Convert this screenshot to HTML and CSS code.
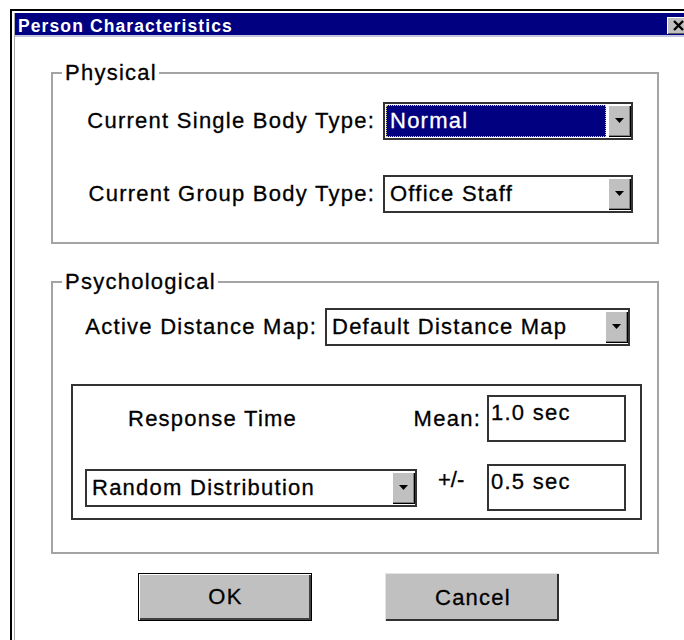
FILE: index.html
```html
<!DOCTYPE html>
<html lang="en">
<head>
<meta charset="utf-8">
<title>Person Characteristics</title>
<link rel="stylesheet" href="styles.css">
</head>
<body>
<div class="window">
  <div class="frame">
    <div class="titlebar">
      <span class="title">Person Characteristics</span>
      <span class="close" aria-label="Close">
        <svg width="11" height="11" viewBox="0 0 11 11"><path d="M1 1L10 10M10 1L1 10" stroke="#000" stroke-width="2.4" fill="none"/></svg>
      </span>
    </div>

    <div class="dialog">
      <fieldset class="group group-physical">
        <legend>Physical</legend>
        <div class="row">
          <span class="label">Current Single Body Type:</span>
          <div class="combo combo-body">
            <span class="combo-value is-selected">Normal</span>
            <span class="combo-btn"><svg width="9" height="6" viewBox="0 0 9 6"><path d="M0 0H9L4.5 5Z" fill="#000"/></svg></span>
          </div>
        </div>
        <div class="row">
          <span class="label">Current Group Body Type:</span>
          <div class="combo combo-body">
            <span class="combo-value">Office Staff</span>
            <span class="combo-btn"><svg width="9" height="6" viewBox="0 0 9 6"><path d="M0 0H9L4.5 5Z" fill="#000"/></svg></span>
          </div>
        </div>
      </fieldset>

      <fieldset class="group group-psych">
        <legend>Psychological</legend>
        <div class="row row-map">
          <span class="label">Active Distance Map:</span>
          <div class="combo combo-map">
            <span class="combo-value">Default Distance Map</span>
            <span class="combo-btn"><svg width="9" height="6" viewBox="0 0 9 6"><path d="M0 0H9L4.5 5Z" fill="#000"/></svg></span>
          </div>
        </div>

        <div class="timing">
          <span class="rt-label">Response Time</span>
          <span class="mean-label">Mean:</span>
          <div class="field">1.0 sec</div>

          <div class="combo combo-dist">
            <span class="combo-value">Random Distribution</span>
            <span class="combo-btn"><svg width="9" height="6" viewBox="0 0 9 6"><path d="M0 0H9L4.5 5Z" fill="#000"/></svg></span>
          </div>
          <span class="pm-label">+/-</span>
          <div class="field">0.5 sec</div>
        </div>
      </fieldset>

      <div class="actions">
        <button class="btn btn-default" type="button">OK</button>
        <button class="btn btn-cancel" type="button">Cancel</button>
      </div>
    </div>
  </div>
</div>
</body>
</html>
```
FILE: styles.css
```css
* {
  box-sizing: border-box;
}

html,
body {
  margin: 0;
  height: 100%;
}

body {
  background: #fff;
  color: #000;
  font-family: "Liberation Sans", Arial, sans-serif;
  font-size: 22px;
  letter-spacing: 1.25px;
  -webkit-text-stroke: 0.3px currentColor;
  overflow: hidden;
}

/* window chrome */
.window {
  margin: 9px 0 0 10px;
  height: 631px;
  border-top: 2px solid #000;
  border-left: 2px solid #000;
  padding: 2px 0 0 2px;
}

.frame {
  height: 100%;
  border-left: 1px solid #a8a8a8;
}

.titlebar {
  display: flex;
  height: 24px;
  background: #000080;
  border-bottom: 2px solid #c4c4dc;
  color: #fff;
}

.title {
  font-weight: bold;
  font-size: 17.5px;
  letter-spacing: 1.1px;
  line-height: 18px;
  padding: 4px 0 0 3px;
  white-space: nowrap;
  -webkit-text-stroke: 0;
}

.close {
  margin-left: auto;
  margin-right: -5px;
  margin-bottom: 1px;
  align-self: flex-end;
  width: 22px;
  height: 17px;
  flex: none;
  display: flex;
  align-items: center;
  justify-content: center;
  background: #c0c0c0;
  box-shadow: inset 1px 1px 0 #fff, inset -1px -1px 0 #606060;
}

/* dialog body */
.dialog {
  padding: 24px 0 0 36px;
}

.group {
  margin: 0;
  padding: 0;
  width: 608px;
  min-inline-size: 0;
  border: 2px solid #a4a4a4;
}

.group legend {
  margin-left: 9px;
  padding: 0 2px 0 3px;
  line-height: 24px;
  font-size: 22px;
}

.group-physical {
  padding: 17px 24px 29px 0;
}

.group-psych {
  margin-top: 26px;
  padding: 14px 0 32px 0;
}

.row {
  display: flex;
  align-items: center;
  justify-content: flex-end;
  gap: 8px;
  white-space: nowrap;
}

.row + .row {
  margin-top: 35px;
}

.row-map {
  padding-right: 27px;
}

/* drop-down list */
.combo {
  display: flex;
  height: 38px;
  border: 2px solid #333;
  background: #fff;
  padding: 1px 0 1px 1px;
  flex: none;
}

.combo-body {
  width: 250px;
}

.combo-map {
  width: 305px;
}

.combo-dist {
  width: 332px;
  align-self: center;
}

.combo-value {
  flex: 1;
  margin-right: 2px;
  padding-left: 4px;
  line-height: 32px;
  white-space: nowrap;
  overflow: hidden;
}

.combo-value.is-selected {
  background: #000080;
  color: #fff;
  outline: 1px dotted #d8d070;
  outline-offset: -1px;
}

.combo-btn {
  width: 23px;
  flex: none;
  display: flex;
  align-items: center;
  justify-content: center;
  background: #c0c0c0;
  box-shadow: inset 1px 1px 0 #fff, inset -1px -1px 0 #000, inset -2px -2px 0 #808080;
}

/* response time panel */
.timing {
  margin: 38px 15px 0 18px;
  border: 2px solid #333;
  display: grid;
  grid-template-columns: 332px 70px 139px;
  grid-template-rows: 47px 47px;
  row-gap: 22px;
  padding: 9px 14px 7px 12px;
  white-space: nowrap;
}

.rt-label {
  grid-column: 1;
  grid-row: 1;
  align-self: center;
  padding-left: 43px;
}

.mean-label {
  grid-column: 1 / 3;
  grid-row: 1;
  align-self: center;
  justify-self: end;
  padding-right: 6px;
}

.pm-label {
  grid-column: 2;
  grid-row: 2;
  align-self: start;
  padding: 3px 0 0 21px;
  line-height: 25px;
  letter-spacing: 0;
}

.field {
  border: 2px solid #333;
  background: #fff;
  padding: 3px 0 0 2px;
  line-height: 25px;
}

/* push buttons */
.actions {
  display: flex;
  gap: 73px;
  margin-top: 19px;
  padding-left: 87px;
}

.btn {
  width: 174px;
  height: 48px;
  padding: 0 0 0 1px;
  border: 0;
  background: #c0c0c0;
  color: #000;
  font-family: inherit;
  font-size: 22px;
  letter-spacing: 1.25px;
  -webkit-text-stroke: 0.3px currentColor;
}

.btn-default {
  border: 1px solid #000;
  box-shadow: inset 1px 1px 0 #fff, inset -2px -2px 0 #404040;
}

.btn-cancel {
  border-top: 1px solid #e4e4e4;
  border-left: 1px solid #e4e4e4;
  box-shadow: inset -2px -2px 0 #303030;
}
```
